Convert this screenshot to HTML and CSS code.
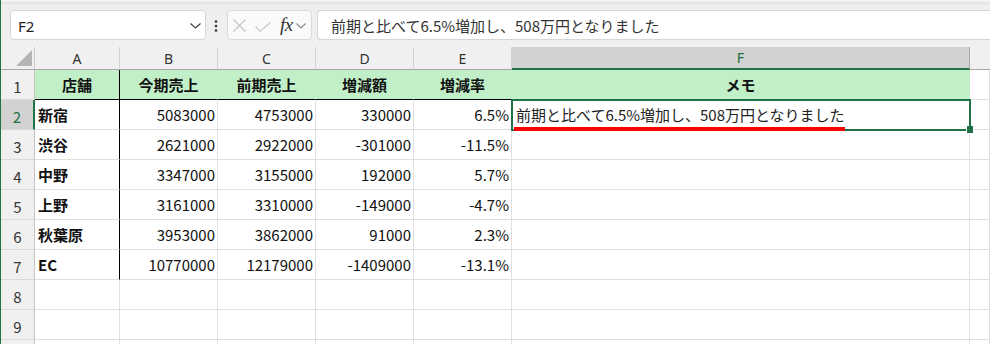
FILE: index.html
```html
<!DOCTYPE html>
<html lang="ja">
<head>
<meta charset="utf-8">
<link rel="stylesheet" href="styles.css">
</head>
<body>
<div class="app">
  <div class="toolbar">
    <div class="namebox">
      <span class="nb-text">F2</span>
      <svg class="nb-chev" width="11" height="6" viewBox="0 0 11 6"><path d="M0.5 0.5 L5.5 5 L10.5 0.5" fill="none" stroke="#444" stroke-width="1.2"/></svg>
    </div>
    <svg class="dots" width="4" height="12" viewBox="0 0 4 12"><circle cx="2" cy="1.5" r="1.3" fill="#333"/><circle cx="2" cy="6" r="1.3" fill="#333"/><circle cx="2" cy="10.5" r="1.3" fill="#333"/></svg>
    <div class="fxbox">
      <svg class="ic-x" width="13" height="13" viewBox="0 0 13 13"><path d="M0.5 0.5 L12.5 12.5 M12.5 0.5 L0.5 12.5" stroke="#c4c4c4" stroke-width="1.1" fill="none"/></svg>
      <svg class="ic-check" width="16" height="10" viewBox="0 0 16 10"><path d="M0.5 4.5 L5 9.3 L15.5 0.5" stroke="#c4c4c4" stroke-width="1.1" fill="none"/></svg>
      <span class="fx">fx</span>
      <svg class="fx-chev" width="10" height="6" viewBox="0 0 10 6"><path d="M0.5 0.5 L5 5 L9.5 0.5" fill="none" stroke="#888" stroke-width="1.1"/></svg>
    </div>
    <div class="formula">前期と比べて6.5%増加し、508万円となりました</div>
  </div>

  <div class="sheet">
    <!-- header row -->
    <div class="corner"><div class="tri"></div></div>
    <div class="ch">A</div>
    <div class="ch">B</div>
    <div class="ch">C</div>
    <div class="ch">D</div>
    <div class="ch">E</div>
    <div class="ch sel">F</div>
    <div class="ch rest"></div>

    <!-- row 1 -->
    <div class="rh">1</div>
    <div class="c hd ca">店舗</div>
    <div class="c hd">今期売上</div>
    <div class="c hd">前期売上</div>
    <div class="c hd">増減額</div>
    <div class="c hd">増減率</div>
    <div class="c hd hdf">メモ</div>
    <div class="c"></div>

    <!-- row 2 -->
    <div class="rh rsel">2</div>
    <div class="c b ca">新宿</div>
    <div class="c num">5083000</div>
    <div class="c num">4753000</div>
    <div class="c num">330000</div>
    <div class="c num">6.5%</div>
    <div class="c active">前期と比べて6.5%増加し、508万円となりました<span class="ime"></span><span class="frame"></span><span class="handle"></span></div>
    <div class="c"></div>

    <!-- row 3 -->
    <div class="rh">3</div>
    <div class="c b ca">渋谷</div>
    <div class="c num">2621000</div>
    <div class="c num">2922000</div>
    <div class="c num">-301000</div>
    <div class="c num">-11.5%</div>
    <div class="c"></div>
    <div class="c"></div>

    <!-- row 4 -->
    <div class="rh">4</div>
    <div class="c b ca">中野</div>
    <div class="c num">3347000</div>
    <div class="c num">3155000</div>
    <div class="c num">192000</div>
    <div class="c num">5.7%</div>
    <div class="c"></div>
    <div class="c"></div>

    <!-- row 5 -->
    <div class="rh">5</div>
    <div class="c b ca">上野</div>
    <div class="c num">3161000</div>
    <div class="c num">3310000</div>
    <div class="c num">-149000</div>
    <div class="c num">-4.7%</div>
    <div class="c"></div>
    <div class="c"></div>

    <!-- row 6 -->
    <div class="rh">6</div>
    <div class="c b ca">秋葉原</div>
    <div class="c num">3953000</div>
    <div class="c num">3862000</div>
    <div class="c num">91000</div>
    <div class="c num">2.3%</div>
    <div class="c"></div>
    <div class="c"></div>

    <!-- row 7 -->
    <div class="rh">7</div>
    <div class="c b ca">EC</div>
    <div class="c num">10770000</div>
    <div class="c num">12179000</div>
    <div class="c num">-1409000</div>
    <div class="c num">-13.1%</div>
    <div class="c"></div>
    <div class="c"></div>

    <!-- row 8 -->
    <div class="rh">8</div>
    <div class="c"></div><div class="c"></div><div class="c"></div><div class="c"></div><div class="c"></div><div class="c"></div><div class="c"></div>

    <!-- row 9 -->
    <div class="rh">9</div>
    <div class="c"></div><div class="c"></div><div class="c"></div><div class="c"></div><div class="c"></div><div class="c"></div><div class="c"></div>

    <!-- row 10 (only its top edge is visible) -->
    <div class="rh"></div>
    <div class="c"></div><div class="c"></div><div class="c"></div><div class="c"></div><div class="c"></div><div class="c"></div><div class="c"></div>
  </div>
</div>
</body>
</html>
```

FILE: styles.css
```css
* { box-sizing: border-box; }

html, body {
  margin: 0;
  padding: 0;
  width: 990px;
  height: 344px;
  overflow: hidden;
  background: #ffffff;
}

.app {
  width: 990px;
  height: 344px;
  border-left: 1px solid #217346;
  overflow: hidden;
}

.toolbar {
  height: 47px;
  display: flex;
  align-items: flex-start;
  padding-top: 10px;
  padding-left: 9px;
  background: linear-gradient(to bottom, #fafafa 0px, #e2e2e2 3px, #eeeeee 5px, #f0f0f0 100%);
}

.namebox {
  width: 196px;
  height: 30px;
  background: #fff;
  border: 1px solid #d6d6d6;
  border-radius: 4px;
  display: flex;
  align-items: center;
  justify-content: space-between;
  padding: 0 4px 0 7px;
}

.nb-text {
  font: 15px "Noto Sans", "Liberation Sans", sans-serif;
  color: #222;
  padding-top: 1px;
}

.nb-chev { margin-top: 2px; }

.dots {
  margin: 10px 0 0 8px;
}

.fxbox {
  margin-left: 9px;
  width: 85px;
  height: 30px;
  background: #fafafa;
  border: 1px solid #dadada;
  border-radius: 4px;
  display: flex;
  align-items: center;
  padding-left: 5px;
}

.ic-x { margin-top: 1px; }
.ic-check { margin-left: 9px; margin-top: 3px; }

.fx {
  margin-left: 9px;
  font: italic 19px "Liberation Serif", "DejaVu Serif", serif;
  color: #333;
  letter-spacing: -0.5px;
  line-height: 1;
  margin-top: -2px;
}

.fx-chev { margin-left: 3px; margin-top: 2px; }

.formula {
  margin-left: 5px;
  flex: 1;
  height: 30px;
  background: #fff;
  border: 1px solid #d6d6d6;
  border-right: none;
  border-radius: 4px 0 0 4px;
  display: flex;
  align-items: center;
  padding-left: 13px;
  font: 15px "Noto Sans CJK JP", sans-serif;
  color: #333;
  white-space: nowrap;
}

.sheet {
  display: grid;
  grid-template-columns: 34px 85px 98px 98px 98px 98px 458px 1fr;
  grid-template-rows: 23px repeat(10, 30px);
}

.corner {
  background: #f0f0f0;
  border-right: 1px solid #c8c8c8;
  border-bottom: 1px solid #a8a8a8;
  position: relative;
}

.tri {
  position: absolute;
  right: 2px;
  bottom: 3px;
  width: 0;
  height: 0;
  border-left: 16px solid transparent;
  border-bottom: 16px solid #b5b5b5;
}

.ch {
  background: #f0f0f0;
  border-right: 1px solid #d2d2d2;
  border-bottom: 1px solid #a8a8a8;
  display: flex;
  align-items: center;
  justify-content: center;
  font: 14px "Noto Sans", "Liberation Sans", sans-serif;
  color: #333;
}

.ch.sel {
  background: #d2d2d2;
  border-right-color: #a8a8a8;
  border-bottom: 2px solid #217346;
  color: #1e6e42;
}

.ch.rest { border-right: none; }

.rh {
  background: #f0f0f0;
  border-right: 1px solid #c4c4c4;
  border-bottom: 1px solid #dadada;
  display: flex;
  align-items: center;
  justify-content: center;
  padding-top: 3px;
  font: 15px "Noto Sans CJK JP", sans-serif;
  color: #333;
}

.rh.rsel {
  background: #d2d2d2;
  border-right: 2px solid #217346;
  color: #1e6e42;
}

.c {
  border-right: 1px solid #e0e0e0;
  border-bottom: 1px solid #e0e0e0;
  display: flex;
  align-items: center;
  padding: 0 3px;
  font: 15px "Noto Sans CJK JP", sans-serif;
  color: #111;
  white-space: nowrap;
  position: relative;
}

.num { justify-content: flex-end; padding-right: 2px; }

.b { font-weight: 700; }

.hd {
  background: #c1f0c8;
  border-right-color: #c1f0c8;
  border-bottom: 1px solid #000;
  justify-content: center;
  font-weight: 700;
}

.hd.hdf {
  border-bottom-color: #1e7145;
  border-right-color: #c1f0c8;
}

.ca { border-right-color: #000; }
.hd.ca { border-right-color: #000; }

.active {
  padding-left: 4px;
  color: #222;
}

.ime {
  position: absolute;
  left: 2px;
  top: 27px;
  width: 331px;
  height: 4px;
  background: #ff0000;
  z-index: 3;
}

.frame {
  position: absolute;
  left: -1px;
  top: -1px;
  width: 460px;
  height: 32px;
  border: 2px solid #1e7145;
  z-index: 2;
  pointer-events: none;
}

.handle {
  position: absolute;
  left: 454px;
  top: 26px;
  width: 8px;
  height: 8px;
  background: #1e7145;
  border: 1px solid #fff;
  border-top: none;
  z-index: 4;
}
```
